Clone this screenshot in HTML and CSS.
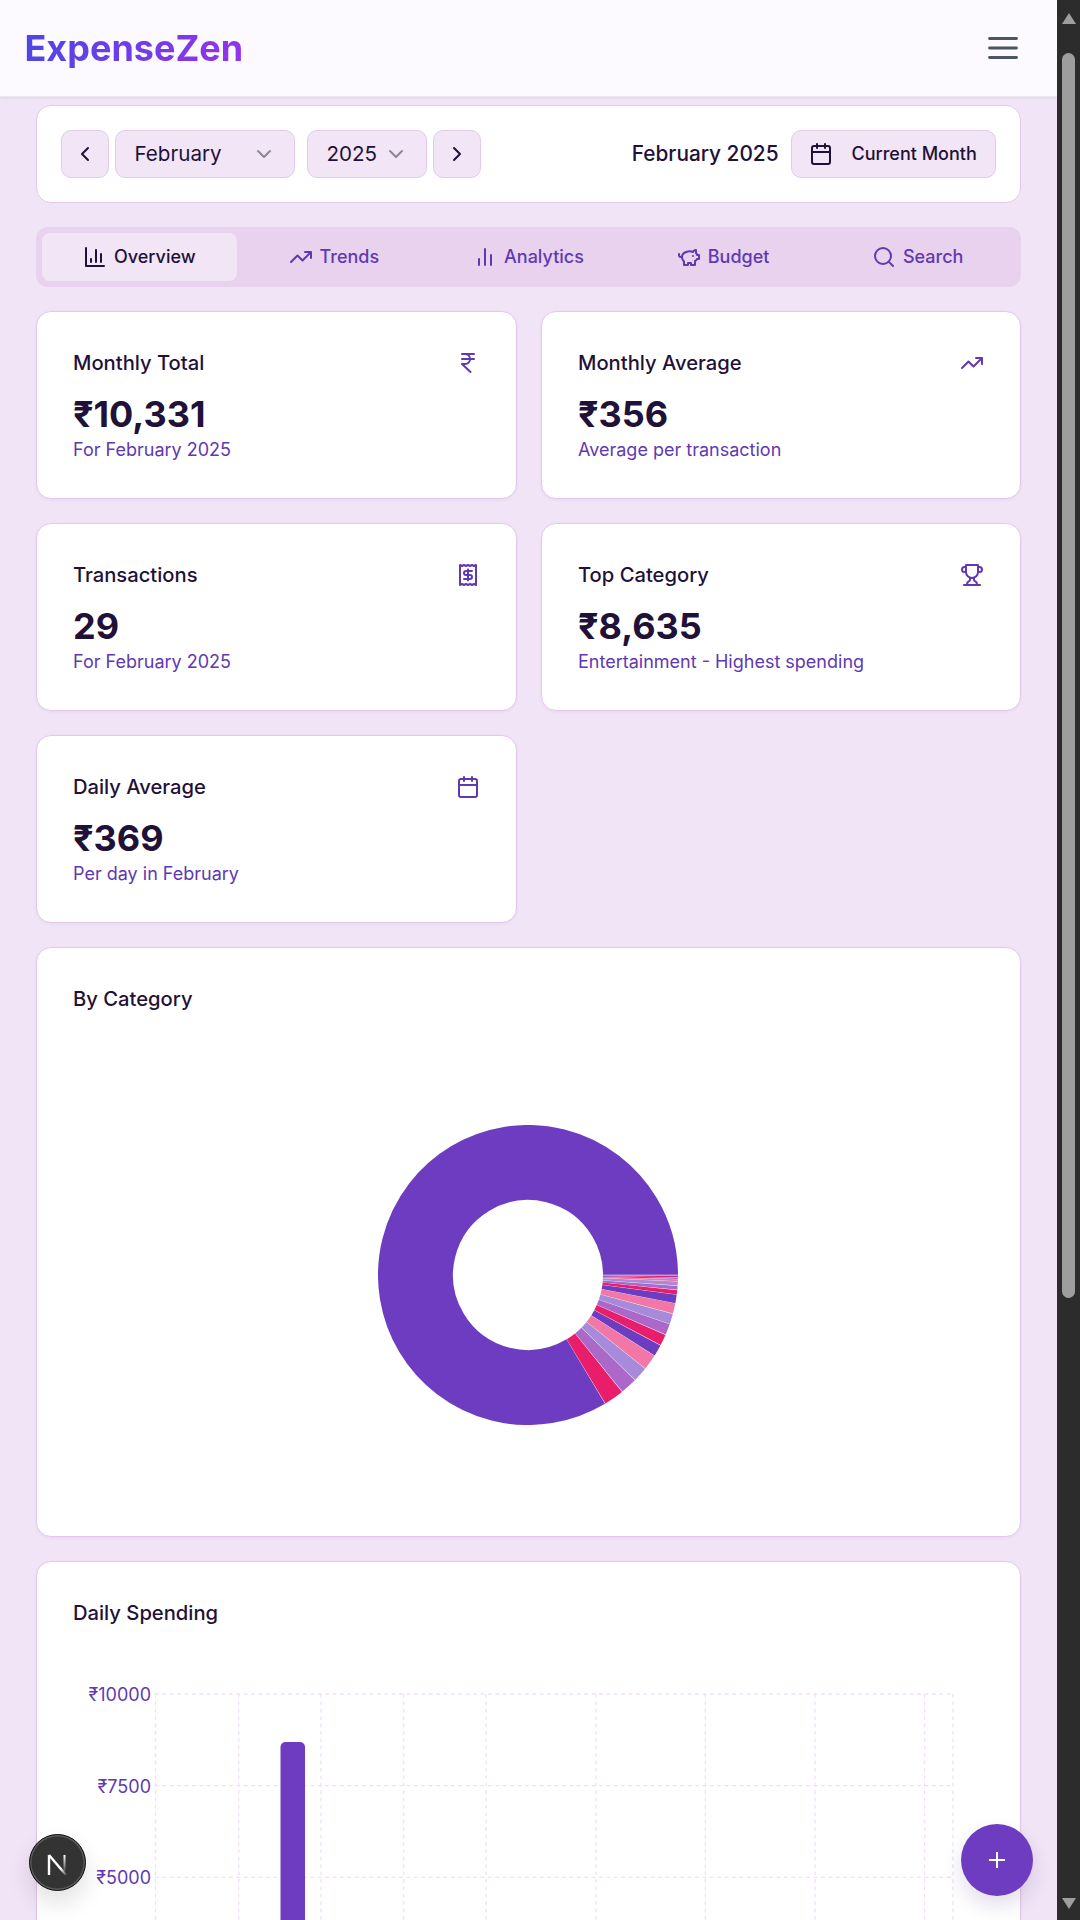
FILE: index.html
```html
<!DOCTYPE html>
<html lang="en">
<head>
<meta charset="utf-8">
<title>ExpenseZen</title>
<link rel="stylesheet" href="styles.css">
</head>
<body>
<div class="page">
  <header class="topbar">
    <div class="logo">ExpenseZen</div>
    <svg class="menu-icon" viewBox="0 0 30 30"><path d="M1.5 5.5h27M1.5 15h27M1.5 24.5h27"/></svg>
  </header>
  <main class="content">
    <section class="filter">
      <div class="filter-left">
        <div class="ctl ctl-square"><svg class="ico" viewBox="0 0 24 24"><path d="m15 18-6-6 6-6"/></svg></div>
        <div class="ctl ctl-select ctl-month"><span>February</span><svg class="ico chev" viewBox="0 0 24 24"><path d="m6 9 6 6 6-6"/></svg></div>
        <div class="ctl ctl-select ctl-year"><span>2025</span><svg class="ico chev" viewBox="0 0 24 24"><path d="m6 9 6 6 6-6"/></svg></div>
        <div class="ctl ctl-square"><svg class="ico" viewBox="0 0 24 24"><path d="m9 18 6-6-6-6"/></svg></div>
      </div>
      <div class="filter-right">
        <span class="period">February 2025</span>
        <div class="ctl ctl-current">
          <svg class="ico" viewBox="0 0 24 24"><rect x="3" y="4" width="18" height="18" rx="2"/><path d="M16 2v4M8 2v4M3 10h18"/></svg>
          <span>Current Month</span>
        </div>
      </div>
    </section>

    <nav class="tabs">
      <div class="tab tab-active"><svg class="ico" viewBox="0 0 24 24"><path d="M3 3v18h18M18 17V9M13 17V5M8 17v-3"/></svg><span>Overview</span></div>
      <div class="tab"><svg class="ico" viewBox="0 0 24 24"><path d="M22 7l-8.5 8.5-5-5L2 17M16 7h6v6"/></svg><span>Trends</span></div>
      <div class="tab"><svg class="ico" viewBox="0 0 24 24"><path d="M18 20V10M12 20V4M6 20v-6"/></svg><span>Analytics</span></div>
      <div class="tab"><svg class="ico" viewBox="0 0 24 24"><path d="M19 5c-1.5 0-2.8 1.4-3 2-3.5-1.5-11-.3-11 5 0 1.8 0 3 2 4.5V20h4v-2h3v2h4v-4c1-.5 1.7-1 2-2h2v-4h-2c0-1-.5-1.5-1-2V5zM2 9v1c0 1.1.9 2 2 2h1M16 11h.01"/></svg><span>Budget</span></div>
      <div class="tab"><svg class="ico" viewBox="0 0 24 24"><circle cx="11" cy="11" r="8"/><path d="m21 21-4.35-4.35"/></svg><span>Search</span></div>
    </nav>

    <section class="stats">
      <article class="card stat">
        <div class="stat-head"><h3 class="card-title">Monthly Total</h3><svg class="ico stat-ico" viewBox="0 0 24 24"><path d="M6 3h12M6 8h12M6 13l8.5 8M6 13h3M9 13c6.667 0 6.667-10 0-10"/></svg></div>
        <div class="stat-value">₹10,331</div>
        <div class="stat-sub">For February 2025</div>
      </article>
      <article class="card stat">
        <div class="stat-head"><h3 class="card-title">Monthly Average</h3><svg class="ico stat-ico" viewBox="0 0 24 24"><path d="M22 7l-8.5 8.5-5-5L2 17M16 7h6v6"/></svg></div>
        <div class="stat-value">₹356</div>
        <div class="stat-sub">Average per transaction</div>
      </article>
      <article class="card stat">
        <div class="stat-head"><h3 class="card-title">Transactions</h3><svg class="ico stat-ico" viewBox="0 0 24 24"><path d="M4 2v20l2-1 2 1 2-1 2 1 2-1 2 1 2-1 2 1V2l-2 1-2-1-2 1-2-1-2 1-2-1-2 1ZM16 8h-6a2 2 0 1 0 0 4h4a2 2 0 1 1 0 4H8M12 17.5v-11"/></svg></div>
        <div class="stat-value">29</div>
        <div class="stat-sub">For February 2025</div>
      </article>
      <article class="card stat">
        <div class="stat-head"><h3 class="card-title">Top Category</h3><svg class="ico stat-ico" viewBox="0 0 24 24"><path d="M6 9H4.5a2.5 2.5 0 0 1 0-5H6M18 9h1.5a2.5 2.5 0 0 0 0-5H18M4 22h16M10 14.66V17c0 .55-.47.98-.97 1.21C7.85 18.75 7 20.24 7 22M14 14.66V17c0 .55.47.98.97 1.21C16.15 18.75 17 20.24 17 22M18 2H6v7a6 6 0 0 0 12 0V2Z"/></svg></div>
        <div class="stat-value">₹8,635</div>
        <div class="stat-sub">Entertainment - Highest spending</div>
      </article>
      <article class="card stat">
        <div class="stat-head"><h3 class="card-title">Daily Average</h3><svg class="ico stat-ico" viewBox="0 0 24 24"><rect x="3" y="4" width="18" height="18" rx="2"/><path d="M16 2v4M8 2v4M3 10h18"/></svg></div>
        <div class="stat-value">₹369</div>
        <div class="stat-sub">Per day in February</div>
      </article>
    </section>

    <section class="card chart-card">
      <h3 class="card-title">By Category</h3>
      <div class="pie-wrap">
        <svg class="pie" viewBox="0 0 300 300">
          <g class="slices">
            <circle class="c1" cx="150" cy="150" r="112.5" pathLength="360" stroke-dasharray="300.8 59.2" transform="rotate(59.1 150 150)"/>
            <circle class="c2" cx="150" cy="150" r="112.5" pathLength="360" stroke-dasharray="7.8 352.2" transform="rotate(51.2 150 150)"/>
            <circle class="c3" cx="150" cy="150" r="112.5" pathLength="360" stroke-dasharray="6.5 353.5" transform="rotate(44.6 150 150)"/>
            <circle class="c4" cx="150" cy="150" r="112.5" pathLength="360" stroke-dasharray="5.8 354.2" transform="rotate(38.7 150 150)"/>
            <circle class="c5" cx="150" cy="150" r="112.5" pathLength="360" stroke-dasharray="6 354" transform="rotate(32.6 150 150)"/>
            <circle class="c1" cx="150" cy="150" r="112.5" pathLength="360" stroke-dasharray="4.5 355.5" transform="rotate(28 150 150)"/>
            <circle class="c2" cx="150" cy="150" r="112.5" pathLength="360" stroke-dasharray="4.3 355.7" transform="rotate(23.6 150 150)"/>
            <circle class="c3" cx="150" cy="150" r="112.5" pathLength="360" stroke-dasharray="4.3 355.7" transform="rotate(19.2 150 150)"/>
            <circle class="c4" cx="150" cy="150" r="112.5" pathLength="360" stroke-dasharray="4 356" transform="rotate(15.1 150 150)"/>
            <circle class="c5" cx="150" cy="150" r="112.5" pathLength="360" stroke-dasharray="4 356" transform="rotate(11 150 150)"/>
            <circle class="c1" cx="150" cy="150" r="112.5" pathLength="360" stroke-dasharray="3.3 356.7" transform="rotate(7.6 150 150)"/>
            <circle class="c2" cx="150" cy="150" r="112.5" pathLength="360" stroke-dasharray="1.7 358.3" transform="rotate(5.8 150 150)"/>
            <circle class="c3" cx="150" cy="150" r="112.5" pathLength="360" stroke-dasharray="1.5 358.5" transform="rotate(4.2 150 150)"/>
            <circle class="c4" cx="150" cy="150" r="112.5" pathLength="360" stroke-dasharray="1.6 358.4" transform="rotate(2.5 150 150)"/>
            <circle class="c5" cx="150" cy="150" r="112.5" pathLength="360" stroke-dasharray=".8 359.2" transform="rotate(1.6 150 150)"/>
            <circle class="c1" cx="150" cy="150" r="112.5" pathLength="360" stroke-dasharray=".5 359.5" transform="rotate(1 150 150)"/>
            <circle class="c2" cx="150" cy="150" r="112.5" pathLength="360" stroke-dasharray=".6 359.4" transform="rotate(.3 150 150)"/>
            <circle class="c5" cx="150" cy="150" r="112.5" pathLength="360" stroke-dasharray=".3 359.7"/>
          </g>
        </svg>
      </div>
    </section>

    <section class="card chart-card daily-card">
      <h3 class="card-title">Daily Spending</h3>
      <svg class="bars" viewBox="73 1668 911 260">
        <g class="grid">
          <path d="M155 1694h798M155 1785.7h798M155 1877.4h798"/>
          <path d="M155.5 1694v240M238.8 1694v240M321 1694v240M403.7 1694v240M486 1694v240M596 1694v240M705.3 1694v240M815 1694v240M924.6 1694v240M953 1694v240"/>
        </g>
        <path class="bar" d="M280.5 1930v-183a5 5 0 0 1 5-5h14.5a5 5 0 0 1 5 5v183z"/>
        <text class="tick" x="151" y="1701">₹10000</text>
        <text class="tick" x="151" y="1793">₹7500</text>
        <text class="tick" x="151" y="1884">₹5000</text>
      </svg>
    </section>
  </main>

  <div class="next-badge">
    <svg class="next-logo" viewBox="0 0 57 57">
      <defs>
        <linearGradient id="nextFade" x1="0" y1="0" x2="0" y2="1"><stop offset="0" stop-color="#fff"/><stop offset="1" stop-color="#fff" stop-opacity=".15"/></linearGradient>
        <linearGradient id="nextDiag" gradientUnits="userSpaceOnUse" x1="19" y1="21" x2="37" y2="41"><stop offset="0" stop-color="#fff"/><stop offset=".7" stop-color="#fff"/><stop offset="1" stop-color="#fff" stop-opacity=".1"/></linearGradient>
      </defs>
      <path class="next-n" d="M20 41V21" stroke="#fff"/>
      <path class="next-n" d="M20 21l17 20" stroke="url(#nextDiag)"/>
      <rect x="34.5" y="21" width="2" height="16" fill="url(#nextFade)"/>
    </svg>
  </div>
  <div class="fab"><svg class="fab-plus" viewBox="0 0 16 16"><path d="M8 0v16M0 8h16"/></svg></div>
</div>
<div class="scrollbar">
  <div class="arrow arrow-up"></div>
  <div class="thumb"></div>
  <div class="arrow arrow-down"></div>
</div>
</body>
</html>
```

FILE: styles.css
```css
* { box-sizing: border-box; }
html, body { margin: 0; height: 1920px; overflow: hidden; }
body {
  display: flex;
  font-family: Inter, "Liberation Sans", sans-serif;
  color: #1f1138;
  background: #f1e4f6;
}
h3 { margin: 0; }

.page {
  position: relative;
  width: 1057px;
  height: 1920px;
  overflow: hidden;
  background: #f1e4f6;
}

.topbar {
  height: 97px;
  padding: 0 39px 0 24.5px;
  display: flex;
  align-items: center;
  justify-content: space-between;
  background: #fcfaff;
  border-bottom: 1px solid #ece6ee;
  box-shadow: 0 1px 3px rgba(60, 20, 80, .08);
}
.logo {
  font-size: 36px;
  font-weight: 700;
  line-height: 44px;
  background: linear-gradient(90deg, #4f46e5, #9333ea);
  -webkit-background-clip: text;
  background-clip: text;
  color: transparent;
}
.menu-icon {
  width: 30px;
  height: 30px;
  fill: none;
  stroke: #4b5563;
  stroke-width: 2.8;
  stroke-linecap: round;
}

.content {
  padding: 8px 36px 0;
  display: flex;
  flex-direction: column;
  gap: 24px;
}

.ico {
  width: 24px;
  height: 24px;
  flex: none;
  fill: none;
  stroke: currentColor;
  stroke-width: 2;
  stroke-linecap: round;
  stroke-linejoin: round;
}

.filter {
  height: 98px;
  padding: 0 24.5px 0 23.5px;
  display: flex;
  align-items: center;
  justify-content: space-between;
  background: #fff;
  border: 1px solid #e4c8ec;
  border-radius: 15px;
}
.filter-left, .filter-right { display: flex; align-items: center; }
.filter-left { gap: 6px; }
.filter-right { gap: 12px; }
.period { font-size: 20.8px; font-weight: 500; line-height: 24px; }

.ctl {
  height: 48px;
  display: flex;
  align-items: center;
  background: #f2e5f6;
  border: 1px solid #e3c9ec;
  border-radius: 10px;
  font-size: 20.6px;
  line-height: 24px;
  white-space: nowrap;
}
.ctl-square { width: 48px; justify-content: center; }
.ctl-select { padding: 0 18px 0 19px; gap: 6px; justify-content: space-between; }
.ctl-month { width: 180px; }
.ctl-year { width: 120px; margin-left: 6px; }
.chev { color: #8d8499; }
.ctl-current {
  width: 205px;
  padding: 0 17px;
  gap: 19px;
  font-size: 18px;
  font-weight: 500;
}

.tabs {
  height: 60px;
  padding: 6px;
  display: grid;
  grid-template-columns: repeat(5, 1fr);
  background: #e8d2ee;
  border-radius: 12px;
}
.tab {
  display: flex;
  align-items: center;
  justify-content: center;
  gap: 7px;
  padding-bottom: 1px;
  border-radius: 8px;
  font-size: 18px;
  font-weight: 500;
  color: #6039b2;
}
.tab-active { background: #f2e5f6; color: #1f1138; }

.stats {
  display: grid;
  grid-template-columns: 481px 1fr;
  gap: 24.5px 24px;
}
.card {
  background: #fff;
  border: 1px solid #e4c8ec;
  border-radius: 15px;
  box-shadow: 0 1px 3px rgba(90, 40, 120, .06);
}
.stat { padding: 36px; height: 187.5px; }
.stat-head {
  display: flex;
  align-items: center;
  justify-content: space-between;
  height: 30px;
}
.card-title {
  font-size: 20.2px;
  font-weight: 500;
  line-height: 30px;
  color: #1f1138;
}
.stat-ico { color: #6039b2; }
.stat-value {
  margin-top: 14px;
  font-size: 36px;
  font-weight: 700;
  line-height: 44px;
  color: #1f1138;
}
.stat-sub {
  margin-top: 2px;
  font-size: 18px;
  line-height: 24.5px;
  color: #6039b2;
}

.chart-card { padding: 36.5px 36px; height: 590px; }
.pie-wrap {
  margin-top: 36px;
  height: 449px;
  padding-right: 1.5px;
  display: flex;
  align-items: center;
  justify-content: center;
}
.pie { width: 300px; height: 300px; display: block; }
.slices circle { fill: none; stroke-width: 75; }
.slices .c1 { stroke: #6d3cc0; }
.slices .c2 { stroke: #e91e6b; }
.slices .c3 { stroke: #ab68c9; }
.slices .c4 { stroke: #a78bda; }
.slices .c5 { stroke: #f276a6; }

.daily-card { height: 420px; }
.bars { display: block; margin-top: 40px; width: 911px; height: 260px; overflow: visible; }
.grid path { fill: none; stroke: #f1dff6; stroke-width: 1.3; stroke-dasharray: 3.7 3.7; }
.bar { fill: #6d3cc0; }
.tick { fill: #6039b2; font-size: 18px; text-anchor: end; }

.fab {
  position: absolute;
  left: 961px;
  top: 1824px;
  width: 72px;
  height: 72px;
  display: flex;
  align-items: center;
  justify-content: center;
  border-radius: 50%;
  background: #6d3cc0;
  box-shadow: 0 10px 20px rgba(60, 20, 100, .14);
}
.fab-plus { width: 16px; height: 16px; fill: none; stroke: #fff; stroke-width: 2; }

.next-badge {
  position: absolute;
  left: 28.5px;
  top: 1834px;
  width: 57px;
  height: 57px;
  border-radius: 50%;
  background: #333;
  border: 1px solid #111;
  box-shadow: inset 0 0 0 1.5px #5a5a5a, 0 12px 24px rgba(0, 0, 0, .12);
}
.next-logo { display: block; margin: -1px; width: 57px; height: 57px; }
.next-n { fill: none; stroke-width: 2.4; }

.scrollbar {
  width: 23px;
  height: 1920px;
  flex: none;
  padding: 13px 0 11px;
  display: flex;
  flex-direction: column;
  align-items: center;
  justify-content: space-between;
  background: #2c2c2c;
}
.arrow { width: 0; height: 0; border-left: 7.5px solid transparent; border-right: 7.5px solid transparent; }
.arrow-up { border-bottom: 11px solid #9e9e9e; }
.arrow-down { border-top: 11px solid #9e9e9e; }
.thumb {
  width: 13px;
  margin-top: 29px;
  height: 1245px;
  margin-bottom: auto;
  background: #9e9e9e;
  border-radius: 6.5px;
}
```
